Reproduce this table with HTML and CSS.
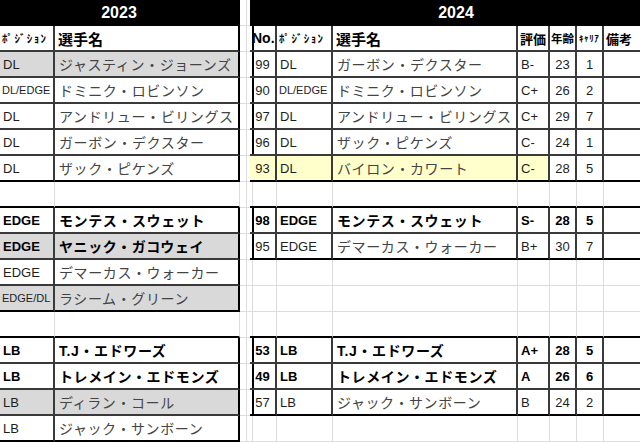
FILE: index.html
```html
<!DOCTYPE html>
<html lang="ja">
<head>
<meta charset="utf-8">
<title>Roster</title>
<link rel="stylesheet" href="styles.css">
</head>
<body>
<div class="sheet">
  <div class="row">
    <div class="c hd span2">2023</div><div class="c"></div><div class="c"></div>
    <div class="c hd span7">2024</div>
  </div>
  <div class="row">
    <div class="c t kana">ﾎﾟｼﾞｼｮﾝ</div><div class="c t or jhead">選手名</div><div class="c"></div><div class="c lead"></div>
    <div class="c t no">No.</div><div class="c t kana">ﾎﾟｼﾞｼｮﾝ</div><div class="c t jhead">選手名</div><div class="c t jh2">評価</div><div class="c t jh3">年齢</div><div class="c t kana2">ｷｬﾘｱ</div><div class="c t jh2">備考</div>
  </div>
  <div class="row">
    <div class="c t gray">DL</div><div class="c t or gray name">ジャスティン・ジョーンズ</div><div class="c"></div><div class="c lead"></div>
    <div class="c t num">99</div><div class="c t">DL</div><div class="c t name">ガーボン・デクスター</div><div class="c t">B-</div><div class="c t num">23</div><div class="c t num">1</div><div class="c t"></div>
  </div>
  <div class="row">
    <div class="c t sm">DL/EDGE</div><div class="c t or name">ドミニク・ロビンソン</div><div class="c"></div><div class="c lead"></div>
    <div class="c t num">90</div><div class="c t sm">DL/EDGE</div><div class="c t name">ドミニク・ロビンソン</div><div class="c t">C+</div><div class="c t num">26</div><div class="c t num">2</div><div class="c t"></div>
  </div>
  <div class="row">
    <div class="c t">DL</div><div class="c t or name">アンドリュー・ビリングス</div><div class="c"></div><div class="c lead"></div>
    <div class="c t num">97</div><div class="c t">DL</div><div class="c t name">アンドリュー・ビリングス</div><div class="c t">C+</div><div class="c t num">29</div><div class="c t num">7</div><div class="c t"></div>
  </div>
  <div class="row">
    <div class="c t">DL</div><div class="c t or name">ガーボン・デクスター</div><div class="c"></div><div class="c lead"></div>
    <div class="c t num">96</div><div class="c t">DL</div><div class="c t name">ザック・ピケンズ</div><div class="c t">C-</div><div class="c t num">24</div><div class="c t num">1</div><div class="c t"></div>
  </div>
  <div class="row">
    <div class="c t ob">DL</div><div class="c t or ob name">ザック・ピケンズ</div><div class="c"></div><div class="c lead"></div>
    <div class="c t ob num yel">93</div><div class="c t ob yel">DL</div><div class="c t ob name yel">バイロン・カワート</div><div class="c t ob yel">C-</div><div class="c t ob num">28</div><div class="c t ob num">5</div><div class="c t ob"></div>
  </div>
  <div class="row">
    <div class="c above"></div><div class="c above"></div><div class="c"></div><div class="c"></div>
    <div class="c above"></div><div class="c above"></div><div class="c above"></div><div class="c above"></div><div class="c above"></div><div class="c above"></div><div class="c above"></div>
  </div>
  <div class="row">
    <div class="c t b">EDGE</div><div class="c t or name b">モンテス・スウェット</div><div class="c"></div><div class="c lead"></div>
    <div class="c t num b">98</div><div class="c t b">EDGE</div><div class="c t name b">モンテス・スウェット</div><div class="c t b">S-</div><div class="c t num b">28</div><div class="c t num b">5</div><div class="c t"></div>
  </div>
  <div class="row">
    <div class="c t gray b">EDGE</div><div class="c t or gray name b">ヤニック・ガコウェイ</div><div class="c"></div><div class="c lead"></div>
    <div class="c t ob num">95</div><div class="c t ob">EDGE</div><div class="c t ob name">デマーカス・ウォーカー</div><div class="c t ob">B+</div><div class="c t ob num">30</div><div class="c t ob num">7</div><div class="c t ob"></div>
  </div>
  <div class="row">
    <div class="c t">EDGE</div><div class="c t or name">デマーカス・ウォーカー</div><div class="c"></div><div class="c"></div>
    <div class="c"></div><div class="c"></div><div class="c"></div><div class="c"></div><div class="c"></div><div class="c"></div><div class="c"></div>
  </div>
  <div class="row">
    <div class="c t ob gray sm">EDGE/DL</div><div class="c t or ob gray name">ラシーム・グリーン</div><div class="c"></div><div class="c"></div>
    <div class="c"></div><div class="c"></div><div class="c"></div><div class="c"></div><div class="c"></div><div class="c"></div><div class="c"></div>
  </div>
  <div class="row">
    <div class="c above"></div><div class="c above"></div><div class="c"></div><div class="c"></div>
    <div class="c above"></div><div class="c above"></div><div class="c above"></div><div class="c above"></div><div class="c above"></div><div class="c above"></div><div class="c above"></div>
  </div>
  <div class="row">
    <div class="c t b">LB</div><div class="c t or name b">T.J・エドワーズ</div><div class="c"></div><div class="c lead"></div>
    <div class="c t num b">53</div><div class="c t b">LB</div><div class="c t name b">T.J・エドワーズ</div><div class="c t b">A+</div><div class="c t num b">28</div><div class="c t num b">5</div><div class="c t"></div>
  </div>
  <div class="row">
    <div class="c t b">LB</div><div class="c t or name b">トレメイン・エドモンズ</div><div class="c"></div><div class="c lead"></div>
    <div class="c t num b">49</div><div class="c t b">LB</div><div class="c t name b">トレメイン・エドモンズ</div><div class="c t b">A</div><div class="c t num b">26</div><div class="c t num b">6</div><div class="c t"></div>
  </div>
  <div class="row">
    <div class="c t gray">LB</div><div class="c t or gray name">ディラン・コール</div><div class="c"></div><div class="c lead"></div>
    <div class="c t ob num">57</div><div class="c t ob">LB</div><div class="c t ob name">ジャック・サンボーン</div><div class="c t ob">B</div><div class="c t ob num">24</div><div class="c t ob num">2</div><div class="c t ob"></div>
  </div>
  <div class="row">
    <div class="c t ob">LB</div><div class="c t or ob name">ジャック・サンボーン</div><div class="c"></div><div class="c"></div>
    <div class="c"></div><div class="c"></div><div class="c"></div><div class="c"></div><div class="c"></div><div class="c"></div><div class="c"></div>
  </div>
</div>
</body>
</html>
```
FILE: styles.css
```css
html, body {
  margin: 0;
  padding: 0;
  background: #ffffff;
}

.sheet {
  width: 640px;
  height: 442px;
  overflow: hidden;
  font-family: "Liberation Sans", "Noto Sans CJK JP", sans-serif;
}

.row {
  display: grid;
  grid-template-columns: 55px 185px 6px 4px 27px 56px 185px 32px 27px 27px 60px;
  height: 26px;
}

.c {
  box-sizing: border-box;
  min-width: 0;
  display: flex;
  align-items: center;
  padding: 0 3px;
  white-space: nowrap;
  overflow: hidden;
  border-right: 1px solid #dcdcdc;
  border-bottom: 1px solid #dcdcdc;
  font-size: 13px;
  color: #1e1e1e;
}

.t {
  border-right: 2px solid #3a3a3a;
  border-bottom: 2px solid #3a3a3a;
}

.or { border-right-color: #000; }
.ob { border-bottom-color: #000; }
.above { border-bottom: 2px solid #000; }
.lead { border-right: 2px solid #000; }

.hd {
  background: #000;
  color: #fff;
  font-weight: bold;
  font-size: 16px;
  justify-content: center;
  border-right: 2px solid #000;
  border-bottom: 2px solid #000;
  padding-top: 1px;
}
.span2 { grid-column: span 2; }
.span7 { grid-column: span 7; }

.kana {
  font-family: "Noto Sans CJK JP", sans-serif;
  font-size: 11px;
  font-weight: bold;
  letter-spacing: 1.4px;
  color: #000;
  padding-left: 2px;
}
.kana2 {
  font-family: "Noto Sans CJK JP", sans-serif;
  font-size: 9px;
  font-weight: bold;
  letter-spacing: 0.6px;
  color: #000;
  padding-left: 2px;
}
.jhead {
  font-size: 15px;
  font-weight: bold;
  color: #000;
  padding-left: 3px;
}
.jh2 {
  font-size: 13px;
  font-weight: bold;
  color: #000;
  padding-left: 2px;
}
.jh3 {
  font-size: 11.5px;
  font-weight: bold;
  color: #000;
  padding-left: 1px;
}
.no {
  font-size: 14px;
  font-weight: bold;
  color: #000;
  padding-left: 2px;
}

.num { justify-content: center; padding: 0; }
.sm { font-size: 11px; padding-left: 2px; }

.name {
  font-size: 14px;
  letter-spacing: 0.6px;
  padding-left: 4px;
  color: #444;
}
.b { font-weight: bold; color: #000; }

.gray { background: #d9d9d9; }
.yel { background: #ffffcc; }
```
